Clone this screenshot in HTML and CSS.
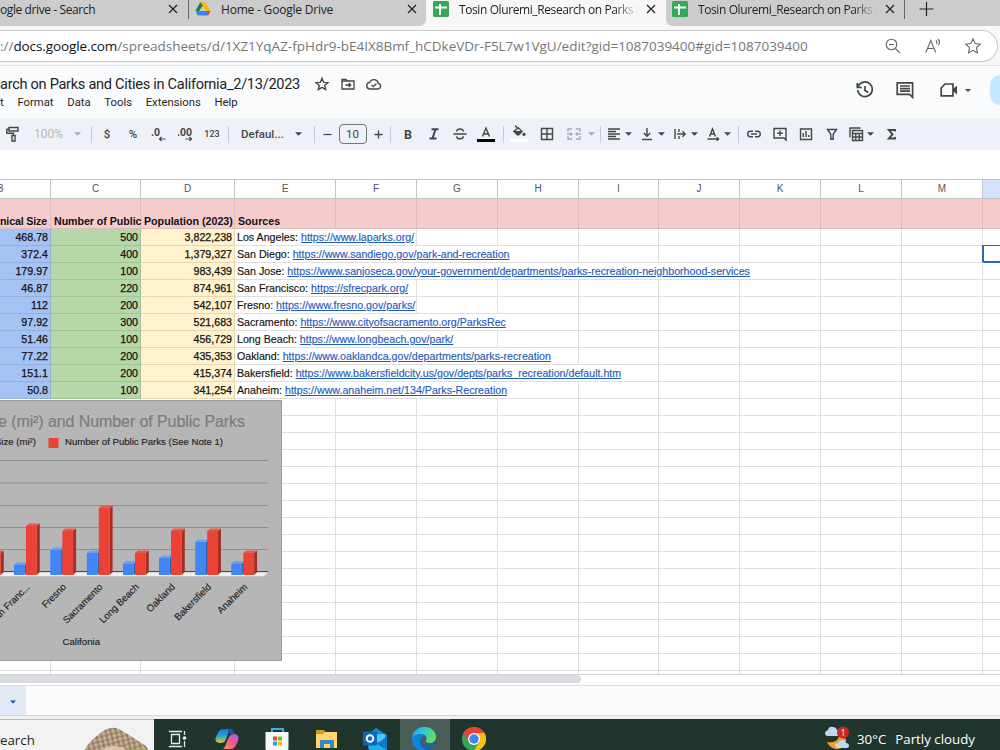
FILE: index.html
```html
<!DOCTYPE html>
<html lang="en">
<head>
    <meta charset="UTF-8">
    <meta name="viewport" content="width=device-width, initial-scale=1.0">
    <title>Research on Parks and Cities in California_2/13/2023 - Google Sheets</title>
    <link rel="stylesheet" href="styles.css">
</head>
<body>
    <!-- browser tabs -->
    <div class="tabs">
        <div class="tab tab-search">
            <span class="tab-title">ogle drive - Search</span>
            <svg class="close" viewBox="0 0 10 10"><path d="M1 1l8 8M9 1l-8 8"/></svg>
        </div>
        <div class="tab tab-drive">
            <svg class="tab-icon" viewBox="0 0 16 16">
                <path fill="#2da94f" d="M5.3 1.5h3L3 12.8.8 9z"/>
                <path fill="#ffba00" d="M5.3 1.5h5L15.6 10h-5z"/>
                <path fill="#3c83f6" d="M3.2 10h12.2l-2.2 4.6H2.8L.8 10.800z"/>
                <path fill="#188038" d="M5.300 1.500L.6 10h3L8 4.500z"/>
                <path fill="#ea4335" d="M11.500 10h4.100l-2.400 4.300z"/>
                <path fill="#ccc" d="M8 6l2.300 4H5.700z"/>
            </svg>
            <span class="tab-title">Home - Google Drive</span>
            <svg class="close" viewBox="0 0 10 10"><path d="M1 1l8 8M9 1l-8 8"/></svg>
        </div>
        <div class="tab tab-active">
            <svg class="tab-icon" viewBox="0 0 16 16"><rect width="16" height="16" rx="1.500" fill="#34a853"/><path d="M7 3v11M2 6.500h12" stroke="#fff" stroke-width="2"/></svg>
            <span class="tab-title fade">Tosin Oluremi_Research on Parks a</span>
            <svg class="close" viewBox="0 0 10 10"><path d="M1 1l8 8M9 1l-8 8"/></svg>
        </div>
        <div class="tab tab-last">
            <svg class="tab-icon" viewBox="0 0 16 16"><rect width="16" height="16" rx="1.500" fill="#34a853"/><path d="M7 3v11M2 6.500h12" stroke="#fff" stroke-width="2"/></svg>
            <span class="tab-title fade">Tosin Oluremi_Research on Parks a</span>
            <svg class="close" viewBox="0 0 10 10"><path d="M1 1l8 8M9 1l-8 8"/></svg>
        </div>
        <svg class="new-tab" viewBox="0 0 14 14"><path d="M7 0v14M0 7h14"/></svg>
    </div>

    <div class="address-row">
        <div class="address-bar">
            <span class="url">://<b>docs.google.com</b>/spreadsheets/d/1XZ1YqAZ-fpHdr9-bE4IX8Bmf_hCDkeVDr-F5L7w1VgU/edit?gid=1087039400#gid=1087039400</span>
            <div class="address-icons">
                <svg viewBox="0 0 16 16"><circle cx="6.500" cy="6.500" r="5.300"/><path d="M4 6.500h5M10.500 10.500l4.700 4.700"/></svg>
                <svg viewBox="0 0 16 16"><path d="M.8 14.500L5.800 2.500l5 12M2.600 10.500h6.400M11 2.500c1 1 1 2.500.3 3.500M13 1c1.700 1.800 1.700 4.500.5 6.300"/></svg>
                <svg viewBox="0 0 16 16"><path d="M8 .8l2.200 4.800 5.100.6-3.800 3.500 1 5.200L8 12.300l-4.500 2.600 1-5.200L.7 6.200l5.100-.6z"/></svg>
            </div>
        </div>
    </div>

    <!-- document header -->
    <header class="doc-header">
        <div class="doc-info">
            <div class="title-row">
                <span class="doc-title">arch on Parks and Cities in California_2/13/2023</span>
                <svg viewBox="0 0 24 24"><path d="M12 3.500l2.500 6 6.500.5-5 4.200 1.600 6.300-5.600-3.500-5.600 3.500L8 14.200 3 10l6.500-.5z"/></svg>
                <svg viewBox="0 0 24 24"><path d="M3 5h6l2 2.500h10V19.500H3zM3 7.500h8M8 13.500h8M13 10.500l3 3-3 3"/></svg>
                <svg viewBox="0 0 24 24"><path d="M6.500 19.500a5 5 0 0 1-.7-10A6.500 6.500 0 0 1 18.300 11a4.300 4.300 0 0 1-.3 8.500zM8.500 13.500l2.500 2.500 4.500-4.500"/></svg>
            </div>
            <nav class="menu">
                <span>t</span><span>Format</span><span>Data</span><span>Tools</span><span>Extensions</span><span>Help</span>
            </nav>
        </div>
        <div class="doc-actions">
            <svg class="history" viewBox="0 0 18 18"><path d="M2.200 5.500A7.300 7.300 0 1 1 1.700 9M1.300 2v4.500h4.500M9 5v4.500l3.300 2"/></svg>
            <svg class="comments" viewBox="0 0 18 18"><path d="M1.200 1.800h15.400v14.500l-3-3H1.200zM4 5h10M4 7.600h10M4 10.200h10"/></svg>
            <svg class="meet" viewBox="0 0 18 18"><path d="M5 3h8v11.800H1.200V7z"/><path class="solid" d="M13 8l4-3.500v9l-4-3.500z"/></svg>
            <svg class="caret" viewBox="0 0 8 4"><path d="M0 0h8L4 4z"/></svg>
            <div class="share"></div>
        </div>
    </header>

    <div class="toolbar">
        <svg viewBox="0 0 16 16"><path d="M4 1.500h9v3.500H4zM4 3.200H1.800v4H8.500v2M7 9.500h3V15H7z"/></svg>
        <span class="zoom-level">100%</span>
        <svg class="caret dim" viewBox="0 0 8 4"><path d="M0 0h8L4 4z"/></svg>
        <i class="sep"></i>
        <span class="sym">$</span>
        <span class="sym">%</span>
        <svg viewBox="0 0 16 16"><text x="0" y="10" class="decimals">.0</text><path class="thin" d="M14.500 13H8.500M10.500 11l-2 2 2 2"/></svg>
        <svg viewBox="0 0 16 16"><text x="-1" y="10" class="decimals">.00</text><path class="thin" d="M7.500 13h6M11.500 11l2 2-2 2"/></svg>
        <span class="num">123</span>
        <i class="sep"></i>
        <span class="font-name">Defaul...</span>
        <svg class="caret" viewBox="0 0 8 4"><path d="M0 0h8L4 4z"/></svg>
        <i class="sep"></i>
        <svg class="small" viewBox="0 0 10 10"><path d="M.5 5h9"/></svg>
        <span class="font-size">10</span>
        <svg class="small" viewBox="0 0 10 10"><path d="M.5 5h9M5 .5v9"/></svg>
        <i class="sep"></i>
        <b class="bold">B</b>
        <svg viewBox="0 0 16 16"><path d="M5.500 3.200h7M3.500 12.500h7M9.500 3.200L6.500 12.500" stroke-width="2"/></svg>
        <svg viewBox="0 0 16 16"><path d="M1.500 8h13M11.500 5.500C11.200 3.800 9.800 3 8 3S4.600 4 4.700 5.500M11.300 10.300c0 1.700-1.500 2.500-3.300 2.500s-3.300-.8-3.500-2.500"/></svg>
        <svg class="wide" viewBox="0 0 18 18"><path d="M5.500 11.500L9 3l3.500 8.500M6.700 9h4.600"/><path class="bar-black" d="M0 14h18v3H0z"/></svg>
        <i class="sep"></i>
        <svg class="wide" viewBox="0 0 18 18"><path class="solid" d="M3 6l5.500-4L13 6.500l-4 4-2 .1-4-4z"/><path d="M5 .5l4 4"/><path class="light" d="M5.300 6l3-2.300L10.700 6z"/><circle class="solid" cx="14" cy="9.300" r="1.600"/><path class="bar-white" d="M0 14h18v3H0z"/></svg>
        <svg viewBox="0 0 16 16"><path d="M2.500 2.500h11v11h-11zM8 2.500v11M2.500 8h11"/></svg>
        <svg class="dim" viewBox="0 0 16 16"><path d="M6 3H2v3M10 3h4v3M6 13H2v-3M10 13h4v-3M1 8h5M15 8h-5M4.500 6.500L6 8 4.500 9.500M11.500 6.500L10 8l1.500 1.500"/></svg>
        <svg class="caret dim" viewBox="0 0 8 4"><path d="M0 0h8L4 4z"/></svg>
        <i class="sep"></i>
        <div class="drop">
            <svg viewBox="0 0 16 16"><path d="M2 3h12M2 5.500h8M2 8h12M2 10.500h8M2 13h12"/></svg>
            <svg class="caret" viewBox="0 0 8 4"><path d="M0 0h8L4 4z"/></svg>
        </div>
        <div class="drop">
            <svg viewBox="0 0 16 16"><path d="M8 2v8M4.800 7L8 10.200 11.200 7M3 13.500h10"/></svg>
            <svg class="caret" viewBox="0 0 8 4"><path d="M0 0h8L4 4z"/></svg>
        </div>
        <div class="drop">
            <svg viewBox="0 0 16 16"><path d="M3 3v10M7 3v3M7 10v3M5 8h8M10.500 5.300L13.200 8l-2.700 2.700"/></svg>
            <svg class="caret" viewBox="0 0 8 4"><path d="M0 0h8L4 4z"/></svg>
        </div>
        <div class="drop">
            <svg viewBox="0 0 16 16"><path d="M4.500 10.500L7.500 3l3 7.500M5.500 8h4M2.500 13h11M11.800 11.200l1.800 1.800-1.800 1.800"/></svg>
            <svg class="caret" viewBox="0 0 8 4"><path d="M0 0h8L4 4z"/></svg>
        </div>
        <i class="sep"></i>
        <svg viewBox="0 0 16 16"><path d="M7 5.200H4.500a2.800 2.800 0 0 0 0 5.600H7M9 5.200h2.500a2.800 2.800 0 0 1 0 5.600H9M5 8h6"/></svg>
        <svg viewBox="0 0 16 16"><path d="M2 2.500h12v11.500l-2-2H2zM8 4.500v5.500M5.200 7.200h5.600"/></svg>
        <svg viewBox="0 0 16 16"><path d="M2.500 3h11v10.500h-11zM5.200 7v4M8 5v6M10.800 9v2"/></svg>
        <svg viewBox="0 0 16 16"><path d="M2.500 3.500h9L8.200 8.300v4.900H5.800V8.300z"/></svg>
        <div class="drop">
            <svg viewBox="0 0 16 16"><path d="M2 11.500V2h10.500M4.500 4.500h10v10h-10zM4.500 7.500h10M4.500 11h10M7.800 7.500v7M11.200 7.500v7"/></svg>
            <svg class="caret" viewBox="0 0 8 4"><path d="M0 0h8L4 4z"/></svg>
        </div>
        <svg viewBox="0 0 16 16"><path d="M12 5.500V4H5.800l3.700 4.300-3.700 4.200H12V11" stroke-width="1.900"/></svg>
    </div>

    <!-- spreadsheet -->
    <div class="sheet">
        <table class="grid">
            <colgroup id="cols"></colgroup>
            <thead>
                <tr>
                    <th class="col-b">B</th><th>C</th><th>D</th><th>E</th><th>F</th><th>G</th><th>H</th><th>I</th><th>J</th><th>K</th><th>L</th><th>M</th><th class="selected"></th>
                </tr>
            </thead>
            <tbody id="rows">
                <tr class="heading">
                    <td class="size-head"><div>nical Size (</div></td><td class="parks-head">Number of Public</td><td>Population (2023)</td><td>Sources</td><td></td><td></td><td></td><td></td><td></td><td></td><td></td><td></td><td></td>
                </tr>
            </tbody>
        </table>

        <svg class="chart" viewBox="0 0 282 261">
            <rect x="-1" y=".5" width="282.500" height="260" fill="#b6b6b6" stroke="#9b9b9b"/>
            <text class="chart-title" x="245" y="26.500" text-anchor="end" textLength="247">e (mi²) and Number of Public Parks</text>
            <g class="legend">
                <text x="36" y="45" text-anchor="end">Size (mi²)</text>
                <rect x="48.500" y="38" width="10" height="10" fill="#ea4335"/>
                <text x="65" y="45" textLength="158">Number of Public Parks (See Note 1)</text>
            </g>
            <path class="lines" d="M0 60.500h268M0 83h268M0 105.500h268M0 127.500h268M0 149.500h268"/>
            <path d="M0 171.700h268" stroke="#333"/>
            <path d="M0 172.200h268l-4 4H0z" fill="#efefef"/>
            <g id="bars"></g>
            <g id="labels" class="labels"></g>
            <text class="axis-title" x="62.500" y="245" textLength="37.500">Califonia</text>
        </svg>
    </div>

    <div class="scroll-row"><div class="scroll-thumb"></div></div>
    <div class="sheet-tabs"><div class="sheet-tab"><svg class="caret" viewBox="0 0 8 4"><path d="M0 0h8L4 4z"/></svg></div></div>

    <div class="taskbar">
        <div class="search-box">
            <span>earch</span>
            <svg viewBox="0 0 68 24">
                <defs>
                    <pattern id="scales" width="5" height="4.600" patternUnits="userSpaceOnUse" patternTransform="rotate(-14)">
                        <rect width="5" height="4.600" fill="#8f785f"/>
                        <circle cx="2.300" cy="2.200" r="2.100" fill="#bda68b"/>
                        <circle cx="2" cy="1.700" r=".9" fill="#d3bfa5"/>
                    </pattern>
                </defs>
                <path d="M1 22C5 15 14 7 21 3q7-4 14-1c9 5 18 11 24 15 4 2 6 5 4 7H44l-7-3-14 3H1z" fill="url(#scales)"/>
                <path d="M17 24q6-5 13-5t14 5z" fill="#d8c7ae"/>
                <path d="M42 24l6-2h16v2z" fill="#a7a457"/>
            </svg>
        </div>
        <div class="app">
            <svg viewBox="0 0 24 24" fill="none" stroke="#e6ebe9" stroke-width="1.300"><path d="M5.500 7.500h8v9h-8zM3.500 5V4.500h12V5M3.500 19v.5h12V19M18.500 4v4M18.500 14v6"/><circle cx="18.500" cy="11" r="1.200" fill="#fff"/></svg>
        </div>
        <div class="app">
            <svg viewBox="0 0 24 24">
                <defs>
                    <linearGradient id="cpA" x1="0" y1="0" x2="0" y2="1"><stop offset="0" stop-color="#1a6fe0"/><stop offset=".5" stop-color="#23a7d2"/><stop offset="1" stop-color="#e8c31e"/></linearGradient>
                    <linearGradient id="cpB" x1="1" y1="0" x2="0" y2="1"><stop offset="0" stop-color="#a759e8"/><stop offset=".5" stop-color="#ee5a91"/><stop offset="1" stop-color="#ff9a4b"/></linearGradient>
                </defs>
                <path d="M8 2h8c-3 2-3 6-5 10-1 3-3 4-6 4-5 0-5-4-4-6 2-4 3-8 7-8z" fill="url(#cpA)"/>
                <path d="M13 2h3c2 0 3 3 4 5h-4c-2 0-3-4-3-5z" fill="#1e50bd"/>
                <path d="M16 22H8c3-2 3-6 5-10 1-3 3-5 6-5 5 0 5 4 4 7-2 4-3 8-7 8z" fill="url(#cpB)"/>
            </svg>
        </div>
        <div class="app">
            <svg viewBox="0 0 24 24">
                <path d="M7 6V2h11v4" fill="none" stroke="#38b1e2" stroke-width="2"/>
                <path d="M.5 5h23v16q0 3-3 3h-17q-3 0-3-3z" fill="#f6f8f8"/>
                <path d="M8 9.500h4v4H8z" fill="#ef4e25"/><path d="M13 9.500h4v4h-4z" fill="#80b829"/><path d="M8 14.500h4v4H8z" fill="#1ba0e5"/><path d="M13 14.500h4v4h-4z" fill="#fbb817"/>
            </svg>
        </div>
        <div class="app">
            <svg viewBox="0 0 24 24">
                <path d="M2 3h8l2 3h10v5H2z" fill="#d7981b"/>
                <path d="M2 7h7l2-2h12v16H2z" fill="#ffd769"/>
                <path d="M6 21v-7q0-1 1-1h12q1 0 1 1v7h-4v-4h-6v4z" fill="#3287c8"/>
            </svg>
        </div>
        <div class="app">
            <svg viewBox="0 0 24 24">
                <path d="M5 7l8-6 11 7v14H5z" fill="#1684d9"/>
                <path d="M8 7h14v8H8z" fill="#49c8f5"/>
                <path d="M6 12l9 5 9-7v14H6z" fill="#1faeea"/>
                <path d="M14 17l10-8v14z" fill="#1475c9"/>
                <rect y="4.500" width="14" height="14" rx="1" fill="#0f66b8"/>
                <circle cx="7" cy="11.500" r="3.300" fill="none" stroke="#fff" stroke-width="1.900"/>
            </svg>
        </div>
        <div class="app app-open">
            <svg viewBox="0 0 24 24">
                <defs>
                    <linearGradient id="edge" x1="0" y1="0" x2="1" y2=".3"><stop offset="0" stop-color="#269ee8"/><stop offset=".5" stop-color="#34c5d7"/><stop offset="1" stop-color="#62db67"/></linearGradient>
                </defs>
                <circle cx="12" cy="12" r="12" fill="#0c66bd"/>
                <path d="M0 12C0 4 6 0 12 0c8 0 12 5 12 10 0 4-3 6-6 6-3 0-5-1-4-3 1-3-1-6-5-6-4 0-8 2-9 5z" fill="url(#edge)"/>
                <path d="M9.500 13c0-2 1-4 3-4.500 2 1 2.500 3 1.500 4.500s0 4 6 4l2-1c-2 3-5 4-7 3.500-3.500-1-5.500-3.500-5.500-6.500z" fill="#4b5d59"/>
                <path d="M0 12c1-3 5-5 9-5 2 0 3 .5 4 1.500-3 0-5 3-5 6 0 4 3 8 7 9C6 26 0 19 0 12z" fill="#1184d8"/>
            </svg>
        </div>
        <div class="app">
            <svg viewBox="0 0 24 24">
                <circle cx="12" cy="12" r="12" fill="#34a853"/>
                <path d="M1.600 6A12 12 0 0 1 22.400 6H12L6.800 15z" fill="#ea4335"/>
                <path d="M22.400 6A12 12 0 0 1 12 24l5.200-9L12 6z" fill="#fbc116"/>
                <circle cx="12" cy="12" r="6" fill="#fff"/><circle cx="12" cy="12" r="4.700" fill="#4285f4"/>
            </svg>
        </div>
        <div class="weather">
            <svg viewBox="0 0 24 24">
                <path d="M14 10c-1 5-5 7-12 6 2 4 5 7 10 7 6 0 10-5 9-10z" fill="#f59d29"/>
                <path d="M3 10q-3 0-3-3 0-2 3-3 1-4 5-3 3 0 4 3 3 0 3 3t-3 3z" fill="#bfd7f5"/>
                <path d="M13 22q-3 0-3-3 0-2 3-2 1-3 4-3t4 3q3 0 3 3 0 2-3 2z" fill="#bfd7f5"/>
                <circle cx="18" cy="6.500" r="6" fill="#c42b1c"/>
                <text x="18" y="10" text-anchor="middle" class="badge">1</text>
            </svg>
            <span class="temp">30°C</span>
            <span class="sky">Partly cloudy</span>
        </div>
    </div>

    <script>
        const colWidths = [51, 90, 94, 101, 81, 81, 81, 80, 81, 81, 81, 81, 81];

        // size, parks, population, city, link, columns the link runs over
        const cities = [
            ['468.78', '500', '3,822,238', 'Los Angeles', 'https://www.laparks.org/', 2],
            ['372.4', '400', '1,379,327', 'San Diego', 'https://www.sandiego.gov/park-and-recreation', 4],
            ['179.97', '100', '983,439', 'San Jose', 'https://www.sanjoseca.gov/your-government/departments/parks-recreation-neighborhood-services', 7],
            ['46.87', '220', '874,961', 'San Francisco', 'https://sfrecpark.org/', 2],
            ['112', '200', '542,107', 'Fresno', 'https://www.fresno.gov/parks/', 2],
            ['97.92', '300', '521,683', 'Sacramento', 'https://www.cityofsacramento.org/ParksRec', 4],
            ['51.46', '100', '456,729', 'Long Beach', 'https://www.longbeach.gov/park/', 3],
            ['77.22', '200', '435,353', 'Oakland', 'https://www.oaklandca.gov/departments/parks-recreation', 4],
            ['151.1', '200', '415,374', 'Bakersfield', 'https://www.bakersfieldcity.us/gov/depts/parks_recreation/default.htm', 5],
            ['50.8', '100', '341,254', 'Anaheim', 'https://www.anaheim.net/134/Parks-Recreation', 4]
        ];

        document.getElementById('cols').innerHTML =
            colWidths.map(w => `<col style="width:${w}px">`).join('');

        let html = '';
        cities.forEach(([size, parks, pop, city, link, span], i) => {
            html += `<tr><td class="size">${size}</td><td class="parks">${parks}</td><td class="pop">${pop}</td>`;
            html += `<td class="source" colspan="${span}">${city}: <a>${link}</a></td>`;
            for (let c = 3 + span; c < 13; c++) {
                html += i === 1 && c === 12 ? '<td class="active-cell"></td>' : '<td></td>';
            }
            html += '</tr>';
        });
        for (let r = 0; r < 17; r++) {
            html += '<tr>' + '<td></td>'.repeat(13) + '</tr>';
        }
        document.getElementById('rows').insertAdjacentHTML('beforeend', html);

        // chart bars: x of the blue bar, top of blue, top of red
        const bars = [
            [-22, 160, 153, ''],
            [14, 165, 126, 'San Franc...'],
            [50.3, 150, 131, 'Fresno'],
            [86.8, 153, 108, 'Sacramento'],
            [123, 163.5, 153, 'Long Beach'],
            [159, 158, 131, 'Oakland'],
            [195.2, 142, 131, 'Bakersfield'],
            [231.3, 163.5, 153, 'Anaheim']
        ];
        function bar(x, top, front, side, cap) {
            const b = 175;
            return `<path fill="${side}" d="M${x + 10.8} ${top}l3-2.500V${b - 3}l-3 3z"/>` +
                `<path fill="${cap}" d="M${x} ${top}l3-2.500h10.800l-3 2.500z"/>` +
                `<path fill="${front}" d="M${x} ${top}h10.800V${b}H${x}z"/>`;
        }
        document.getElementById('bars').innerHTML = bars.map(([x, blue, red]) =>
            bar(x, blue, '#4285f4', '#2f5eae', '#6c9ff2') + bar(x + 12, red, '#ea4335', '#a52f25', '#e8594d')).join('');
        document.getElementById('labels').innerHTML = bars.map(([x, , , name]) =>
            `<text text-anchor="end" transform="translate(${x + 16.5} 187.500) rotate(-45)">${name}</text>`).join('');
    </script>
</body>
</html>
```
FILE: styles.css
```css
* {
    box-sizing: border-box;
}
body {
    margin: 0;
    width: 1000px;
    height: 750px;
    overflow: hidden;
    background-color: #fff;
    font-family: "Open Sans", "Noto Sans", sans-serif;
    color: #1f1f1f;
}
svg {
    display: block;
    flex: none;
}

/* browser tabs */
.tabs {
    display: flex;
    height: 26px;
    background-color: #f7f7f7;
}
.tab {
    display: flex;
    align-items: center;
    height: 26px;
    padding-bottom: 8px;
    background-color: #ccc;
    font-size: 12px;
    white-space: nowrap;
}
.tab-search {
    width: 189px;
    position: relative;
}
.tab-search::after, .tab-last::after {
    content: "";
    position: absolute;
    right: 0;
    top: 0;
    width: 1px;
    height: 19px;
    background-color: #666;
}
.tab-drive {
    width: 237px;
    padding-left: 6px;
    border-bottom-right-radius: 7px;
}
.tab-active {
    width: 240px;
    padding-left: 7px;
    background-color: #f7f7f7;
}
.tab-last {
    width: 239px;
    padding-left: 6px;
    border-bottom-left-radius: 7px;
    position: relative;
}
.tab-icon {
    width: 16px;
    height: 16px;
    margin-right: 10px;
}
.tab-title {
    letter-spacing: -0.4px;
}
.tab-drive .tab-title {
    letter-spacing: -0.2px;
}
.tab-title.fade {
    width: 183px;
    -webkit-mask-image: linear-gradient(90deg, #000 155px, transparent 180px);
    mask-image: linear-gradient(90deg, #000 155px, transparent 180px);
}
.close {
    width: 10px;
    height: 10px;
    margin-left: auto;
    margin-right: 11px;
    stroke: #222;
    stroke-width: 1.2;
}
.tab-active .close, .tab-last .close {
    margin-right: 10px;
}
.tab-drive .close {
    margin-right: 9px;
}
.new-tab {
    width: 95px;
    height: 26px;
    padding: 2px 66px 10px 14px;
    background-color: #ccc;
    stroke: #222;
    stroke-width: 1.2;
}

/* address bar */
.address-row {
    height: 40px;
    padding: 4px 2px 0 0;
    background-color: #f7f7f7;
    border-bottom: 1px solid #e0e5ec;
}
.address-bar {
    display: flex;
    align-items: center;
    justify-content: space-between;
    height: 32px;
    padding-right: 16px;
    background-color: #fff;
    border: 1px solid #c9c9c9;
    border-left: none;
    border-radius: 0 16px 16px 0;
}
.url {
    font-size: 13.5px;
    letter-spacing: -0.01px;
    color: #767676;
    white-space: nowrap;
}
.url b {
    font-weight: normal;
    letter-spacing: -0.1px;
    color: #111;
}
.address-icons {
    display: flex;
    gap: 24px;
}
.address-icons svg {
    width: 16px;
    height: 16px;
    fill: none;
    stroke: #666;
    stroke-width: 1.1;
}

/* document header */
.doc-header {
    display: flex;
    justify-content: space-between;
    height: 52px;
    background-color: #f9fbfd;
    font-family: Roboto, sans-serif;
}
.doc-info {
    padding-top: 8px;
}
.title-row {
    display: flex;
    align-items: center;
    height: 20px;
}
.doc-title {
    width: 314px;
    font-size: 14.6px;
    letter-spacing: -0.3px;
    white-space: nowrap;
}
.title-row svg {
    width: 16px;
    height: 16px;
    margin-right: 10px;
    fill: none;
    stroke: #444746;
    stroke-width: 2;
}
.menu {
    display: flex;
    gap: 13.7px;
    height: 18px;
    font-size: 11.3px;
    line-height: 18px;
}
.doc-actions {
    display: flex;
    align-items: center;
    height: 48px;
}
.doc-actions svg {
    width: 18px;
    height: 18px;
    margin-right: 22px;
    fill: none;
    stroke: #444746;
    stroke-width: 1.7;
}
.doc-actions .comments {
    margin-right: 26px;
}
.doc-actions .meet {
    margin-right: 7px;
}
.doc-actions .solid {
    fill: #444746;
    stroke: none;
}
.doc-actions .caret {
    width: 6px;
    height: 3px;
    margin-right: 19px;
}
.share {
    width: 10px;
    height: 30px;
    background-color: #c2e7ff;
    border-radius: 15px 0 0 15px;
}
svg.caret {
    width: 7px;
    height: 4px;
    fill: #444746;
    stroke: none;
}

/* toolbar */
.toolbar {
    display: grid;
    grid-template-columns: 26px 45px 13px 14px 18px 34px 18px 35px 18px 14px 54px 19px 12px 14px 37px 14px 10px 26px 26px 26px 26px 8px 24px 32px 22px 12px 7px 33px 33px 33px 33px 5px 26px 26px 26px 27px 33px 24px;
    align-items: center;
    justify-items: center;
    height: 32px;
    background-color: #eef2f8;
    font-family: Roboto, sans-serif;
    font-size: 11.5px;
    color: #444746;
}
.toolbar svg:not(.caret) {
    width: 16px;
    height: 16px;
    fill: none;
    stroke: #444746;
    stroke-width: 1.4;
}
.toolbar svg.wide {
    width: 18px;
    height: 18px;
}
.toolbar svg.small {
    width: 9px;
    height: 9px;
}
.toolbar svg.dim {
    opacity: 0.4;
}
.toolbar .solid {
    fill: #444746;
    stroke: none;
}
.toolbar .light {
    fill: #eef2f8;
    stroke: none;
}
.toolbar .bar-black {
    fill: #000;
    stroke: none;
}
.toolbar .bar-white {
    fill: #fff;
    stroke: none;
}
.toolbar .thin {
    stroke-width: 1.2;
}
.decimals {
    font-size: 10.5px;
    font-weight: bold;
    fill: #444746;
    stroke: none;
}
.sep {
    width: 1px;
    height: 17px;
    background-color: #c7cbd1;
}
.zoom-level {
    color: #b3b7bc;
    font-size: 12px;
}
.sym {
    font-weight: 500;
    font-size: 11.5px;
}
.num {
    font-weight: 500;
    font-size: 9px;
}
.font-name {
    justify-self: start;
    padding-left: 6px;
    font-weight: 500;
}
.font-size {
    width: 28px;
    height: 20px;
    border: 1px solid #747775;
    border-radius: 4px;
    line-height: 18px;
    text-align: center;
}
.bold {
    font-size: 12.5px;
}
.drop {
    display: flex;
    align-items: center;
    gap: 3px;
    justify-self: start;
    padding-left: 2px;
}

/* spreadsheet */
.sheet {
    position: relative;
    height: 525px;
    padding-top: 29px;
    overflow: hidden;
    background-color: #fff;
    border-bottom: 1px solid #d5d5d5;
}
.grid {
    width: 1064px;
    table-layout: fixed;
    border-collapse: separate;
    border-spacing: 0;
    border-top: 1px solid #c4c4c4;
    font-family: "Liberation Sans", Arial, sans-serif;
    font-size: 10.67px;
    line-height: 14px;
}
.grid th {
    height: 19px;
    padding: 0;
    border-right: 1px solid #c4c4c4;
    border-bottom: 1px solid #c4c4c4;
    font-size: 10px;
    font-weight: normal;
    color: #50545a;
}
.grid .col-b {
    text-align: left;
    text-indent: -3px;
}
.grid .selected {
    background-color: #d3e3fd;
}
.grid td {
    height: 17px;
    padding: 0 2px 1px;
    border-right: 1px solid #dfdfdf;
    border-bottom: 1px solid #dfdfdf;
    white-space: nowrap;
    color: #111;
}
.grid .heading td {
    height: 30px;
    padding: 0 1px 0 3px;
    vertical-align: bottom;
    background-color: #f4cccc;
    border-color: #dcbcbc;
    font-weight: bold;
}
.heading div {
    overflow: hidden;
}
.grid .heading .size-head {
    padding: 0;
    letter-spacing: -0.15px;
}
.grid .heading .parks-head {
    padding-right: 0;
    letter-spacing: -0.05px;
}
.grid .size, .grid .parks, .grid .pop {
    text-align: right;
    -webkit-text-stroke: 0.25px #111;
}
.grid .size {
    background-color: #a4c2f4;
    border-color: #93afdc;
}
.grid .parks {
    background-color: #b6d7a8;
    border-color: #a3c297;
}
.grid .pop {
    background-color: #fff2cc;
    border-color: #e4d8b4;
}
.grid .source {
    -webkit-text-stroke-width: 0.15px;
}
.source a {
    color: #1f5bbd;
    text-decoration: underline;
}
.grid .active-cell {
    box-shadow: -1px -1px 0 #2f62c4, inset 1px 0 0 #2f62c4, inset 0 -1px 0 #2f62c4;
    border-bottom-color: #2f62c4;
}

/* chart lies over the cells */
.chart {
    position: absolute;
    left: 0;
    top: 250px;
    width: 282px;
    height: 261px;
    font-family: "Liberation Sans", Arial, sans-serif;
}
.chart-title {
    font-size: 16px;
    fill: #7d7d7d;
    stroke: #7d7d7d;
    stroke-width: 0.2px;
}
.legend text, .labels text, .axis-title {
    font-size: 9.6px;
    fill: #222;
    stroke: #222;
    stroke-width: 0.15px;
}
.lines {
    stroke: #8f8f8f;
}

.scroll-row {
    height: 11px;
    border-bottom: 1px solid #dedede;
}
.scroll-thumb {
    width: 581px;
    height: 8px;
    background-color: #dadce0;
    border-radius: 0 4px 4px 0;
}
.sheet-tabs {
    height: 33px;
    background-color: #f9fbfd;
    border-bottom: 3px solid #f1f1f1;
    box-shadow: inset 0 -1px 0 #d8d5d9;
}
.sheet-tab {
    width: 26px;
    height: 29px;
    padding: 14px 0 0 10px;
    background-color: #e1e9f7;
}
.sheet-tab .caret {
    width: 6px;
    fill: #1b4fb5;
}

/* windows taskbar */
.taskbar {
    display: flex;
    height: 31px;
    overflow: hidden;
    background-color: #21352f;
}
.search-box {
    display: flex;
    justify-content: space-between;
    width: 154px;
    height: 40px;
    background-color: #f2f2f2;
    border-top: 1px solid #bbb;
    font-size: 13.3px;
    line-height: 40px;
}
.search-box svg {
    width: 68px;
    height: 24px;
    margin: 7px 2px 0 0;
}
.app {
    width: 49.3px;
    height: 40px;
    padding: 8px 12px;
}
.app svg, .weather svg {
    width: 24px;
    height: 24px;
}
.app-open {
    background-color: #4b5d59;
}
.weather {
    display: flex;
    margin-left: auto;
    padding: 7px 25px 0 0;
    color: #fff;
    font-size: 13.3px;
    line-height: 26px;
    white-space: nowrap;
}
.temp {
    margin: 0 9px 0 8px;
}
.badge {
    font-size: 9px;
    fill: #fff;
}
```
